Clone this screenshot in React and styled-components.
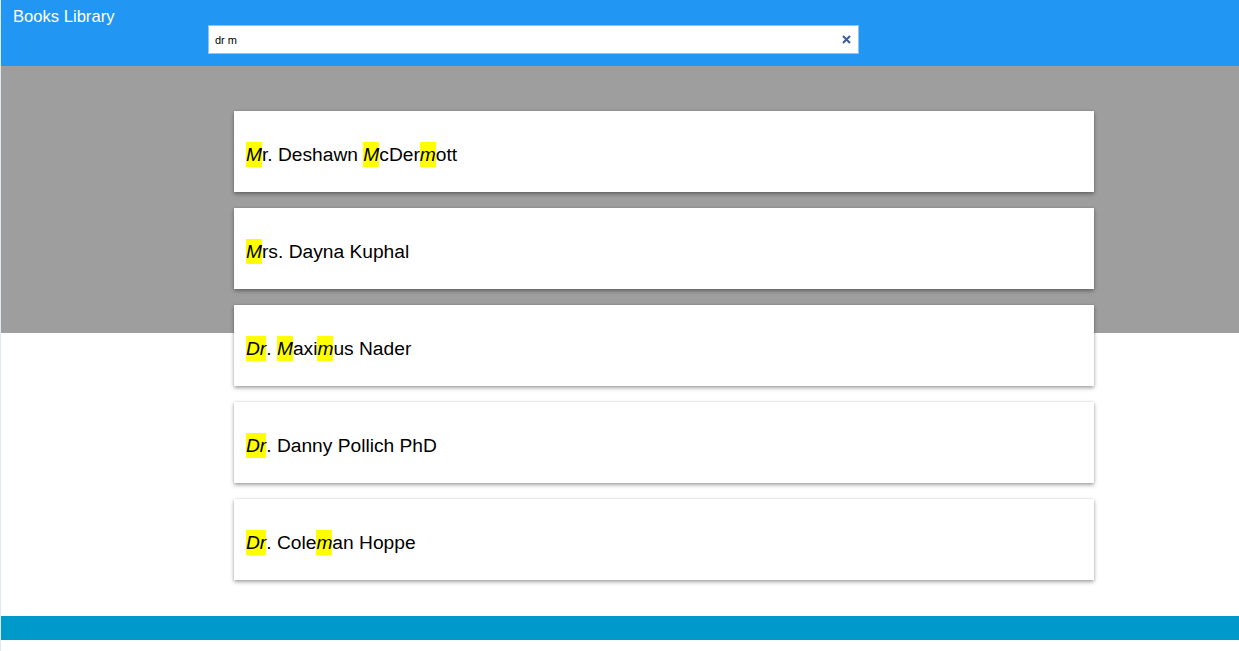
import { createGlobalStyle } from "styled-components";
import styled from "styled-components";

const GlobalStyle = createGlobalStyle`
	html, body {
		margin: 0;
		padding: 0;
		background: #ffffff;
		font-family: "Liberation Sans", Arial, sans-serif;
	}
`;

const authors = [
	"Mr. Deshawn McDermott",
	"Mrs. Dayna Kuphal",
	"Dr. Maximus Nader",
	"Dr. Danny Pollich PhD",
	"Dr. Coleman Hoppe"
];

const query = "dr m";

const Page = styled.div`
	border-left: 1px solid #dfe8f3;
	min-height: 651px;
	box-sizing: border-box;
`;

const Header = styled.header`
	background: #2196f3;
	height: 66px;
	display: flex;
	align-items: flex-start;
	box-sizing: border-box;
	padding: 7px 0 0 12px;
`;

const Title = styled.h1`
	margin: 0;
	width: 195px;
	color: #ffffff;
	font-size: 16.6px;
	font-weight: 400;
	line-height: 20px;
`;

const SearchBox = styled.div`
	margin-top: 18px;
	width: 651px;
	height: 29px;
	box-sizing: border-box;
	background: #ffffff;
	border: 1px solid #90c4f5;
	display: flex;
	align-items: center;
	padding: 0 6px 0 6px;
`;

const SearchInput = styled.input`
	flex: 1;
	border: 0;
	outline: 0;
	padding: 0;
	font-family: "Liberation Sans", Arial, sans-serif;
	font-size: 11px;
	color: #000000;
	caret-color: #000000;
	background: transparent;
`;

const ClearButton = styled.button`
	border: 0;
	background: transparent;
	padding: 0;
	width: 12px;
	height: 12px;
	display: flex;
	align-items: center;
	justify-content: center;
	cursor: pointer;
`;

const Main = styled.main`
	background: linear-gradient(#9e9e9e 0 267px, #ffffff 267px);
	padding: 45px 0 36px 233px;
	display: flex;
	flex-direction: column;
	align-items: flex-start;
	gap: 16px;
`;

const Card = styled.div`
	width: 860px;
	height: 81px;
	box-sizing: border-box;
	background: #ffffff;
	box-shadow: 0 2px 4px rgba(0, 0, 0, 0.35), 0 0 2px rgba(0, 0, 0, 0.12);
	display: flex;
	align-items: center;
	padding: 6px 12px 0;
	font-size: 19.2px;
	color: #000000;
`;

const Mark = styled.mark`
	background: #ffff00;
	color: inherit;
	font-style: italic;
	padding: 2px 0;
`;

const Footer = styled.footer`
	background: #0099cc;
	height: 24px;
`;

// split text, marking the letters that match a query word
const highlight = (text) => {
	const words = query.split(" ").filter(Boolean);
	const marks = new Array(text.length).fill(false);
	const lower = text.toLowerCase();
	words.forEach((w) => {
		let idx = lower.indexOf(w);
		while (idx !== -1) {
			for (let i = idx; i < idx + w.length; i++) marks[i] = true;
			idx = lower.indexOf(w, idx + w.length);
		}
	});
	const parts = [];
	let cur = "";
	let curMark = marks[0];
	for (let i = 0; i < text.length; i++) {
		if (marks[i] !== curMark) {
			parts.push({ text: cur, mark: curMark });
			cur = "";
			curMark = marks[i];
		}
		cur += text[i];
	}
	parts.push({ text: cur, mark: curMark });
	return parts.map((p, i) => (p.mark ? <Mark key={ i }>{ p.text }</Mark> : p.text));
};

const App = () => {
	return (
		<>
			<GlobalStyle />
			<Page>
				<Header>
					<Title>Books Library</Title>
					<SearchBox>
						<SearchInput defaultValue={ query } autoFocus />
						<ClearButton aria-label="clear">
							<svg width="9" height="9" viewBox="0 0 9 9">
								<path d="M1 1 L8 8 M8 1 L1 8" stroke="#3a5a9a" strokeWidth="2" />
							</svg>
						</ClearButton>
					</SearchBox>
				</Header>
				<Main>
					{ authors.map((name) => (
						<Card key={ name }>
							<span>{ highlight(name) }</span>
						</Card>
					))}
				</Main>
				<Footer />
			</Page>
		</>
	);
};

export default App;
